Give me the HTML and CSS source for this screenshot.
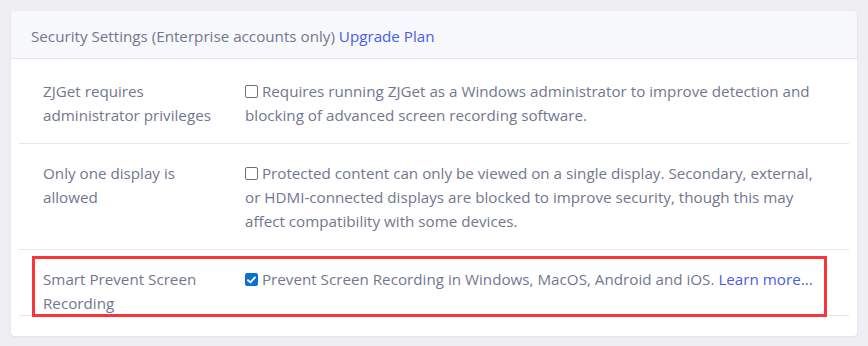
FILE: index.html
```html
<!DOCTYPE html>
<html>
<head>
<meta charset="utf-8">
<link rel="stylesheet" href="styles.css">
</head>
<body>
<div class="card">
  <div class="card-header">Security Settings (Enterprise accounts only) <a class="link" href="#">Upgrade Plan</a></div>
  <div class="card-body">
    <div class="row">
      <div class="label">ZJGet requires administrator privileges</div>
      <div class="value"><span class="cb"></span> Requires running ZJGet as a Windows administrator to improve detection and blocking of advanced screen recording software.</div>
    </div>
    <div class="row">
      <div class="label">Only one display is allowed</div>
      <div class="value"><span class="cb"></span> Protected content can only be viewed on a single display. Secondary, external, or HDMI-connected displays are blocked to improve security, though this may affect compatibility with some devices.</div>
    </div>
    <div class="row last">
      <div class="label">Smart Prevent Screen Recording</div>
      <div class="value"><span class="cb checked"><svg width="9" height="8" viewBox="0 0 9 8"><path d="M1 4.2 L3.4 6.4 L8 1.4" fill="none" stroke="#fff" stroke-width="1.9" stroke-linecap="round" stroke-linejoin="round"/></svg></span> Prevent Screen Recording in Windows, MacOS, Android and iOS. <a class="link" href="#">Learn more...</a></div>
      <div class="highlight"></div>
    </div>
  </div>
</div>
</body>
</html>
```

FILE: styles.css
```css
html, body { margin: 0; padding: 0; }
body {
  background: #eeeef3;
  font-family: "Open Sans", "Noto Sans", sans-serif;
  font-size: 15.2px;
  color: #72778f;
  padding: 11px;
  width: 868px;
  box-sizing: border-box;
  height: 346px;
}
.card {
  width: 846px;
  background: #fff;
  border-radius: 4px;
  box-shadow: 0 1px 3px rgba(60, 60, 90, 0.08);
  padding-bottom: 20px;
}
.card-header {
  background: #f7f8fc;
  border-bottom: 1px solid #e4e5ee;
  border-radius: 4px 4px 0 0;
  height: 47px;
  line-height: 50px;
  padding-left: 20px;
}
.link { color: #4a5ce6; text-decoration: none; }
.card-body {
  padding: 3px 8px 0 8px;
}
.row {
  position: relative;
  display: flex;
  line-height: 24px;
  padding: 17px 0 16px;
  border-bottom: 1px solid #e4e5ee;
}
.row.last { padding-bottom: 0; }
.label {
  width: 178px;
  padding-left: 24px;
  padding-right: 24px;
  flex-shrink: 0;
}
.value {
  flex: 1;
  padding-right: 30px;
}
.cb {
  display: inline-block;
  width: 11px;
  height: 11px;
  border: 1px solid #6f6f78;
  border-radius: 2px;
  vertical-align: -1px;
  position: relative;
  box-sizing: content-box;
}
.cb.checked {
  background: #0c6fd8;
  border-color: #0c6fd8;
}
.cb svg { position: absolute; left: 1px; top: 2px; }
.highlight {
  position: absolute;
  left: 13px;
  right: 22px;
  top: 6px;
  bottom: -2px;
  border: 3px solid #fd3437;
  pointer-events: none;
}
```
